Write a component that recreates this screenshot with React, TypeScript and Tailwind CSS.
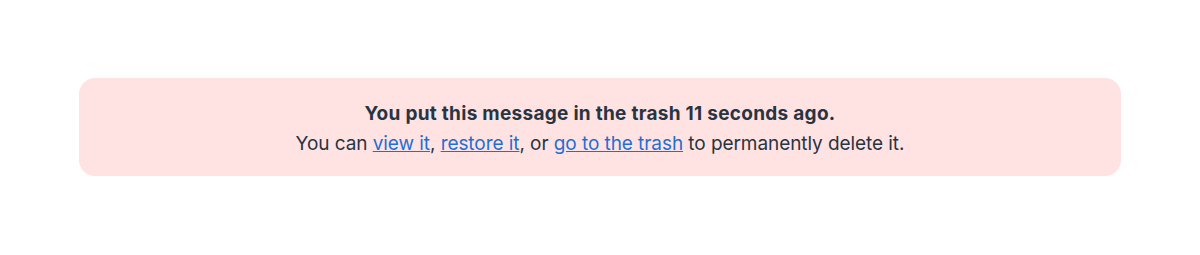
export default function App() {
  return (
    <div className="min-h-[255px] bg-white px-[79px] pt-[78px]" style={{ fontFamily: 'Inter, "Noto Sans", sans-serif' }}>
      <div className="flex h-[98px] flex-col items-center justify-center rounded-[16px] bg-[#ffe3e3] pt-[3px] text-center text-[19px] leading-[30px] text-[#273442]">
        <p className="font-bold tracking-[0.28px]">You put this message in the trash 11 seconds ago.</p>
        <p className="tracking-[-0.07px]">
          You can <a href="#" className="text-[#1f6fd1] underline">view it</a>,{' '}
          <a href="#" className="text-[#1f6fd1] underline">restore it</a>, or{' '}
          <a href="#" className="text-[#1f6fd1] underline">go to the trash</a> to permanently delete it.
        </p>
      </div>
    </div>
  );
}
